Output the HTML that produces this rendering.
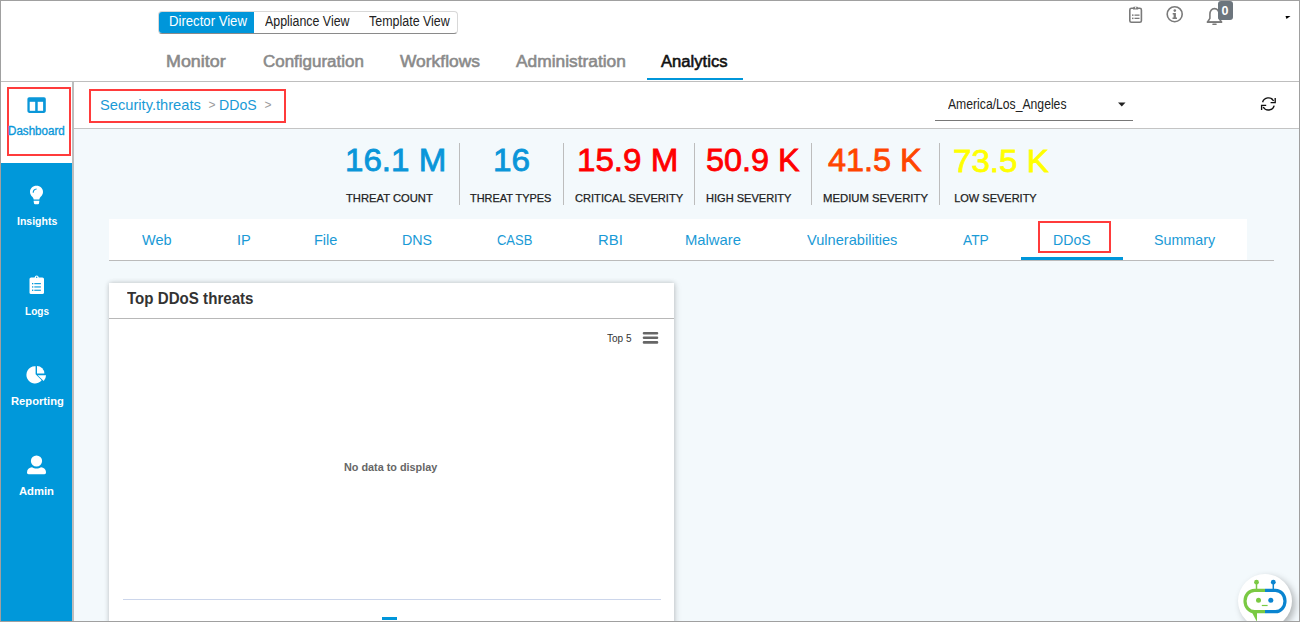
<!DOCTYPE html>
<html><head><meta charset="utf-8">
<style>
*{margin:0;padding:0;box-sizing:border-box}
html,body{width:1300px;height:622px;overflow:hidden;background:#fff}
body{position:relative;font-family:"Liberation Sans",sans-serif;}
.a{position:absolute;white-space:nowrap}
.t{position:absolute;white-space:nowrap;line-height:1}
#frame{position:absolute;left:0;top:0;width:1300px;height:622px;border:1px solid #a0a0a0;z-index:50;pointer-events:none}
</style></head>
<body>
<!-- top header -->
<div class="a" style="left:0;top:0;width:1300px;height:82px;background:#fff"></div>
<!-- view toggle -->
<div class="a" style="left:158px;top:11px;width:300px;height:23px;border:1px solid #d8d8d8;border-bottom-color:#8a8a8a;border-radius:4px;background:#fff"></div>
<div class="a" style="left:159px;top:12px;width:95px;height:21px;background:#0096da;border-radius:3px 0 0 3px"></div>
<div class="t" id="dv" style="left:169.0px;top:14.0px;font-size:14.00px;color:#fff;transform:scaleX(0.939);transform-origin:0 0">Director View</div>
<div class="t" id="av" style="left:265.0px;top:14.0px;font-size:14.00px;color:#222;transform:scaleX(0.885);transform-origin:0 0">Appliance View</div>
<div class="t" id="tv" style="left:368.8px;top:14.0px;font-size:14.00px;color:#222;transform:scaleX(0.890);transform-origin:0 0">Template View</div>

<!-- nav -->
<div class="t" id="n1" style="left:166.0px;top:54.0px;font-size:16.00px;font-weight:normal;color:#8a8a8a;transform:scaleX(1.118);transform-origin:0 0;-webkit-text-stroke:0.55px #8a8a8a">Monitor</div>
<div class="t" id="n2" style="left:262.5px;top:54.0px;font-size:16.00px;font-weight:normal;color:#8a8a8a;transform:scaleX(1.060);transform-origin:0 0;-webkit-text-stroke:0.55px #8a8a8a">Configuration</div>
<div class="t" id="n3" style="left:399.5px;top:54.0px;font-size:16.00px;font-weight:normal;color:#8a8a8a;transform:scaleX(1.088);transform-origin:0 0;-webkit-text-stroke:0.55px #8a8a8a">Workflows</div>
<div class="t" id="n4" style="left:515.5px;top:54.0px;font-size:16.00px;font-weight:normal;color:#8a8a8a;transform:scaleX(1.084);transform-origin:0 0;-webkit-text-stroke:0.55px #8a8a8a">Administration</div>
<div class="t" id="n5" style="left:661.0px;top:54.0px;font-size:16.00px;font-weight:normal;color:#111;transform:scaleX(1.039);transform-origin:0 0;-webkit-text-stroke:0.55px #111">Analytics</div>
<div class="a" style="left:647px;top:78px;width:96px;height:2px;background:#0096da"></div>
<div class="a" style="left:0;top:81px;width:1300px;height:1px;background:#bebebe"></div>

<!-- top-right icons -->
<svg class="a" style="left:1128px;top:5px" width="16" height="19" viewBox="0 0 16 19">
  <rect x="1.8" y="3.3" width="11.6" height="14" rx="1.6" fill="none" stroke="#7a7a7a" stroke-width="1.6"/>
  <path d="M5 4.6V3.2c0-.8.6-1.5 1.4-1.5h2.4c.8 0 1.4.7 1.4 1.5v1.4z" fill="#7a7a7a"/>
  <circle cx="7.6" cy="2.8" r="0.7" fill="#fff"/>
  <rect x="4" y="9.4" width="1.5" height="1.5" fill="#7a7a7a"/><rect x="6.5" y="9.5" width="5" height="1.3" fill="#7a7a7a"/>
  <rect x="4" y="12.6" width="1.5" height="1.5" fill="#7a7a7a"/><rect x="6.5" y="12.7" width="5" height="1.3" fill="#7a7a7a"/>
</svg>
<svg class="a" style="left:1165px;top:5px" width="19" height="19" viewBox="0 0 19 19">
  <circle cx="9.7" cy="9.2" r="7.5" fill="none" stroke="#7a7a7a" stroke-width="1.6"/>
  <circle cx="9.8" cy="5.6" r="1.3" fill="#7a7a7a"/>
  <path d="M7.7 8h3.2v4.5h1.1v1.6H7.5v-1.6h1.1V9.5h-0.9z" fill="#7a7a7a"/>
</svg>
<svg class="a" style="left:1205px;top:6px" width="20" height="20" viewBox="0 0 20 20">
  <path d="M9.5 2.6c-2.9 0-4.6 2.5-4.6 5.6v4.2L2.6 16h13.8L14.1 12.4V8.2c0-3.1-1.7-5.6-4.6-5.6z" fill="none" stroke="#7a7a7a" stroke-width="1.6" stroke-linejoin="round"/>
  <path d="M1.8 16.2h15.4" stroke="#7a7a7a" stroke-width="1.6"/>
  <path d="M8 18.2h3" stroke="#7a7a7a" stroke-width="1.6" stroke-linecap="round"/>
</svg>
<div class="a" style="left:1218px;top:1px;width:15px;height:19px;background:#6c757d;border-radius:3px"></div>
<div class="t" style="left:1221.5px;top:4.5px;font-size:12.5px;font-weight:bold;color:#fff">0</div>
<svg class="a" style="left:1285px;top:15px" width="6" height="5" viewBox="0 0 6 5"><path d="M0.5 1h5L1.5 4z" fill="#000"/></svg>

<!-- sidebar -->
<div class="a" style="left:0;top:82px;width:74px;height:540px;background:#fff;border-right:2px solid #bdbdbd"></div>
<div class="a" style="left:1px;top:163px;width:71px;height:459px;background:#0098da"></div>
<!-- dashboard -->
<div class="a" style="left:7px;top:87px;width:64px;height:69px;border:2px solid #ff3b3b"></div>
<svg class="a" style="left:27px;top:97px" width="19" height="16" viewBox="0 0 19 16">
  <rect x="0.4" y="0.2" width="18.4" height="15.7" rx="1.8" fill="#0a97d9"/>
  <rect x="2.7" y="4.8" width="5.5" height="9" fill="#fff"/>
  <rect x="10.7" y="4.8" width="5.4" height="9" fill="#fff"/>
</svg>
<div class="t" id="sd" style="left:8.0px;top:125.0px;font-size:12.00px;color:#0a97d9;transform:scaleX(0.967);transform-origin:0 0;-webkit-text-stroke:0.35px #0a97d9">Dashboard</div>
<!-- insights -->
<svg class="a" style="left:29px;top:185px" width="15" height="20" viewBox="0 0 15 20">
  <path d="M7.5 0.8C3.8 0.8 1 3.5 1 6.9c0 2.2 1.2 3.7 2.3 4.9.8.9 1.2 1.8 1.4 2.7h5.6c.2-.9.6-1.8 1.4-2.7 1.1-1.2 2.3-2.7 2.3-4.9C14 3.5 11.2.8 7.5.8z" fill="#fff"/>
  <path d="M4.2 7.7c0-2 1.5-3.5 3.4-3.7" stroke="#0098da" stroke-width="1.1" fill="none"/>
  <path d="M4.6 15.8h5.8l-.4 2.6c-.1.5-.5.8-1 .8H6c-.5 0-.9-.3-1-.8z" fill="#fff"/>
</svg>
<div class="t" id="s1" style="left:16.9px;top:216.0px;font-size:11.00px;font-weight:bold;color:#fff;transform:scaleX(0.954);transform-origin:0 0">Insights</div>
<!-- logs -->
<svg class="a" style="left:29px;top:275px" width="16" height="20" viewBox="0 0 16 20">
  <rect x="0.5" y="2.5" width="14.5" height="16.5" rx="1.6" fill="#fff"/>
  <circle cx="7.7" cy="2.3" r="1.9" fill="#fff"/>
  <circle cx="7.7" cy="2.3" r="0.7" fill="#0098da"/>
  <rect x="3" y="8" width="1.3" height="1.3" fill="#0098da"/><rect x="5.3" y="8.1" width="6.6" height="1.1" fill="#0098da"/>
  <rect x="3" y="11.3" width="1.3" height="1.3" fill="#0098da"/><rect x="5.3" y="11.4" width="6.6" height="1.1" fill="#0098da"/>
  <rect x="3" y="14.6" width="1.3" height="1.3" fill="#0098da"/><rect x="5.3" y="14.7" width="6.6" height="1.1" fill="#0098da"/>
</svg>
<div class="t" id="s2" style="left:24.9px;top:305.6px;font-size:11.00px;font-weight:bold;color:#fff;transform:scaleX(0.912);transform-origin:0 0">Logs</div>
<!-- reporting -->
<svg class="a" style="left:25px;top:365px" width="22" height="20" viewBox="0 0 22 20">
  <path d="M9.6 1.3A8.6 8.6 0 1 0 16.7 15.3L10.6 9.2V1.3z" fill="#fff"/>
  <path d="M12 1.1V8.6h7.4A7.6 7.6 0 0 0 12 1.1z" fill="#fff"/>
  <path d="M12.6 10.2h8.4a8.6 8.6 0 0 1-2.3 5.9z" fill="#fff"/>
</svg>
<div class="t" id="s3" style="left:10.9px;top:395.6px;font-size:11.00px;font-weight:bold;color:#fff;transform:scaleX(1.017);transform-origin:0 0">Reporting</div>
<!-- admin -->
<svg class="a" style="left:26px;top:455px" width="21" height="20" viewBox="0 0 21 20">
  <circle cx="10.5" cy="6" r="5.6" fill="#fff"/>
  <path d="M1 17.5c0-3.2 2.2-5 5-5.2 1.2.8 2.7 1.3 4.5 1.3s3.3-.5 4.5-1.3c2.8.2 5 2 5 5.2 0 1-.7 1.7-1.6 1.7H2.6C1.7 19.2 1 18.5 1 17.5z" fill="#fff"/>
</svg>
<div class="t" id="s4" style="left:19.3px;top:485.6px;font-size:11.00px;font-weight:bold;color:#fff;transform:scaleX(1.021);transform-origin:0 0">Admin</div>

<!-- breadcrumb bar -->
<div class="a" style="left:74px;top:82px;width:1226px;height:46px;background:#fff"></div>
<div class="a" style="left:74px;top:128px;width:1226px;height:1px;background:#c4c4c4"></div>
<div class="a" style="left:89px;top:89px;width:197px;height:34px;border:2px solid #ff3b3b"></div>
<div class="t" id="b1" style="left:100.0px;top:98.0px;font-size:14.50px;color:#1a9ad6;transform:scaleX(1.012);transform-origin:0 0">Security.threats</div>
<div class="t" id="b2" style="left:208.5px;top:99px;font-size:12px;color:#9a9a9a">&gt;</div>
<div class="t" id="b3" style="left:219.0px;top:98.0px;font-size:14.50px;color:#1a9ad6;transform:scaleX(0.973);transform-origin:0 0">DDoS</div>
<div class="t" id="b4" style="left:264.5px;top:99px;font-size:12px;color:#9a9a9a">&gt;</div>

<!-- timezone -->
<div class="t" id="tz" style="left:948.0px;top:97.0px;font-size:14.50px;color:#222;transform:scaleX(0.840);transform-origin:0 0">America/Los_Angeles</div>
<svg class="a" style="left:1118px;top:102px" width="8" height="5" viewBox="0 0 8 5"><path d="M0 0.5h7.5L3.75 4.5z" fill="#222"/></svg>
<div class="a" style="left:935px;top:120px;width:198px;height:1px;background:#777"></div>
<!-- refresh -->
<svg class="a" style="left:1260px;top:96px" width="17" height="16" viewBox="0 0 17 16">
  <path d="M2.6 6.2A6 6 0 0 1 13.6 5" fill="none" stroke="#111" stroke-width="1.35"/>
  <path d="M15.2 2v4.6h-4.6" fill="none" stroke="#111" stroke-width="1.35"/>
  <path d="M14.2 9.6A6 6 0 0 1 3.2 11" fill="none" stroke="#111" stroke-width="1.35"/>
  <path d="M1.6 14V9.4h4.6" fill="none" stroke="#111" stroke-width="1.35"/>
</svg>

<!-- main bg -->
<div class="a" style="left:74px;top:129px;width:1226px;height:493px;background:#f3f9fc"></div>

<!-- KPIs -->
<div class="a" style="left:459px;top:143px;width:1px;height:62px;background:#bdbdbd"></div>
<div class="a" style="left:563px;top:143px;width:1px;height:62px;background:#bdbdbd"></div>
<div class="a" style="left:694px;top:143px;width:1px;height:62px;background:#bdbdbd"></div>
<div class="a" style="left:811px;top:143px;width:1px;height:62px;background:#bdbdbd"></div>
<div class="a" style="left:939px;top:143px;width:1px;height:62px;background:#bdbdbd"></div>

<div class="t" id="v1" style="left:345.4px;top:144.2px;font-size:32.00px;color:#0a96d9;transform:scaleX(1.035);transform-origin:0 0;-webkit-text-stroke:0.8px #0a96d9">16.1 M</div>
<div class="t" id="v2" style="left:492.8px;top:144.2px;font-size:32.00px;color:#0a96d9;transform:scaleX(1.043);transform-origin:0 0;-webkit-text-stroke:0.8px #0a96d9">16</div>
<div class="t" id="v3" style="left:577.4px;top:144.2px;font-size:32.00px;color:#ff0000;transform:scaleX(1.035);transform-origin:0 0;-webkit-text-stroke:0.8px #ff0000">15.9 M</div>
<div class="t" id="v4" style="left:706.0px;top:144.2px;font-size:32.00px;color:#ff0000;transform:scaleX(1.012);transform-origin:0 0;-webkit-text-stroke:0.8px #ff0000">50.9 K</div>
<div class="t" id="v5" style="left:827.6px;top:144.2px;font-size:32.00px;color:#ff4500;transform:scaleX(1.013);transform-origin:0 0;-webkit-text-stroke:0.8px #ff4500">41.5 K</div>
<div class="t" id="v6" style="left:952.8px;top:145.2px;font-size:32.00px;color:#ffff00;transform:scaleX(1.035);transform-origin:0 0;-webkit-text-stroke:0.8px #ffff00">73.5 K</div>

<div class="t" id="l1" style="left:346.0px;top:192.7px;font-size:11.00px;color:#222;transform:scaleX(1.019);transform-origin:0 0;font-weight:normal;-webkit-text-stroke:0.25px #222">THREAT COUNT</div>
<div class="t" id="l2" style="left:470.2px;top:192.7px;font-size:11.00px;color:#222;transform:scaleX(0.994);transform-origin:0 0;font-weight:normal;-webkit-text-stroke:0.25px #222">THREAT TYPES</div>
<div class="t" id="l3" style="left:574.6px;top:192.7px;font-size:11.00px;color:#222;transform:scaleX(1.009);transform-origin:0 0;font-weight:normal;-webkit-text-stroke:0.25px #222">CRITICAL SEVERITY</div>
<div class="t" id="l4" style="left:705.8px;top:192.7px;font-size:11.00px;color:#222;transform:scaleX(1.005);transform-origin:0 0;font-weight:normal;-webkit-text-stroke:0.25px #222">HIGH SEVERITY</div>
<div class="t" id="l5" style="left:823.0px;top:192.7px;font-size:11.00px;color:#222;transform:scaleX(1.028);transform-origin:0 0;font-weight:normal;-webkit-text-stroke:0.25px #222">MEDIUM SEVERITY</div>
<div class="t" id="l6" style="left:954.2px;top:192.7px;font-size:11.00px;color:#222;transform:scaleX(1.000);transform-origin:0 0;font-weight:normal;-webkit-text-stroke:0.25px #222">LOW SEVERITY</div>

<!-- tabs -->
<div class="a" style="left:109px;top:219px;width:1138px;height:41px;background:#fff"></div>
<div class="a" style="left:109px;top:260px;width:1165px;height:1px;background:#bbbbbb"></div>
<div class="a" style="left:1021px;top:257px;width:102px;height:3px;background:#0096da"></div>
<div class="a" style="left:1038px;top:221px;width:73px;height:32px;border:2px solid #ff3b3b"></div>
<div class="t tab" id="t1" style="left:142.0px;top:233.0px;font-size:14.50px;color:#1a9ad6;transform:scaleX(1.001);transform-origin:0 0">Web</div>
<div class="t tab" id="t2" style="left:236.5px;top:233.0px;font-size:14.50px;color:#1a9ad6;transform:scaleX(1.007);transform-origin:0 0">IP</div>
<div class="t tab" id="t3" style="left:314.0px;top:233.0px;font-size:14.50px;color:#1a9ad6;transform:scaleX(1.002);transform-origin:0 0">File</div>
<div class="t tab" id="t4" style="left:401.5px;top:233.0px;font-size:14.50px;color:#1a9ad6;transform:scaleX(0.983);transform-origin:0 0">DNS</div>
<div class="t tab" id="t5" style="left:497.0px;top:233.0px;font-size:14.50px;color:#1a9ad6;transform:scaleX(0.895);transform-origin:0 0">CASB</div>
<div class="t tab" id="t6" style="left:597.5px;top:233.0px;font-size:14.50px;color:#1a9ad6;transform:scaleX(1.026);transform-origin:0 0">RBI</div>
<div class="t tab" id="t7" style="left:685.0px;top:233.0px;font-size:14.50px;color:#1a9ad6;transform:scaleX(1.021);transform-origin:0 0">Malware</div>
<div class="t tab" id="t8" style="left:806.5px;top:233.0px;font-size:14.50px;color:#1a9ad6;transform:scaleX(1.007);transform-origin:0 0">Vulnerabilities</div>
<div class="t tab" id="t9" style="left:962.5px;top:233.0px;font-size:14.50px;color:#1a9ad6;transform:scaleX(0.948);transform-origin:0 0">ATP</div>
<div class="t tab" id="t10" style="left:1053.0px;top:233.0px;font-size:14.50px;color:#1a9ad6;transform:scaleX(0.973);transform-origin:0 0">DDoS</div>
<div class="t tab" id="t11" style="left:1154.0px;top:233.0px;font-size:14.50px;color:#1a9ad6;transform:scaleX(0.984);transform-origin:0 0">Summary</div>

<!-- card -->
<div class="a" style="left:109px;top:283px;width:565px;height:360px;background:#fff;box-shadow:0 0 5px rgba(0,0,0,0.2),2px 1px 7px rgba(0,0,0,0.08)"></div>
<div class="a" style="left:109px;top:318px;width:565px;height:1px;background:#b8b8b8"></div>
<div class="t" id="ct" style="left:126.8px;top:290.0px;font-size:16.50px;font-weight:bold;color:#333;transform:scaleX(0.916);transform-origin:0 0">Top DDoS threats</div>
<div class="t" id="top5" style="left:606.5px;top:333.0px;font-size:11.50px;color:#333;transform:scaleX(0.874);transform-origin:0 0">Top 5</div>
<svg class="a" style="left:642px;top:331px" width="17" height="14" viewBox="0 0 17 14">
  <path d="M2 2.2h13M2 6.8h13M2 11.4h13" stroke="#666" stroke-width="2.6" stroke-linecap="round"/>
</svg>
<div class="t" id="nd" style="left:344.0px;top:462.0px;font-size:11.50px;font-weight:bold;color:#666;transform:scaleX(0.942);transform-origin:0 0">No data to display</div>
<div class="a" style="left:123px;top:599px;width:538px;height:1px;background:#ccd6eb"></div>
<div class="a" style="left:382px;top:617px;width:15px;height:3px;background:#0096da"></div>

<!-- chatbot -->
<div class="a" style="left:1238px;top:574px;width:54px;height:54px;border-radius:50%;background:#fff;box-shadow:3px 3px 7px rgba(0,0,0,0.28)"></div>
<svg class="a" style="left:1240px;top:574px" width="50" height="48" viewBox="0 0 50 48">
  <line x1="16.5" y1="8.5" x2="16.5" y2="15" stroke="#7ac943" stroke-width="1.5"/>
  <circle cx="16.5" cy="8.2" r="2.4" fill="#7ac943"/>
  <line x1="33.3" y1="8.5" x2="33.3" y2="15" stroke="#0a84d0" stroke-width="1.5"/>
  <circle cx="33.3" cy="8.2" r="2.4" fill="#0a84d0"/>
  <path d="M25 16.3H14.5a9.5 10.7 0 0 0 0 21.4H25" fill="none" stroke="#7ac943" stroke-width="3.2"/>
  <path d="M25 16.3H35.5a9.5 10.7 0 0 1 0 21.4H25" fill="none" stroke="#0a84d0" stroke-width="3.2"/>
  <path d="M12 38.5h5v9.5z" fill="#7ac943"/>
  <circle cx="18.5" cy="26.3" r="2.5" fill="#7ac943"/>
  <circle cx="30.8" cy="26.3" r="2.5" fill="#0a84d0"/>
  <path d="M21.8 31.5h5.8" stroke="#7ac943" stroke-width="1.2"/>
</svg>

<div id="frame"></div>
</body></html>
